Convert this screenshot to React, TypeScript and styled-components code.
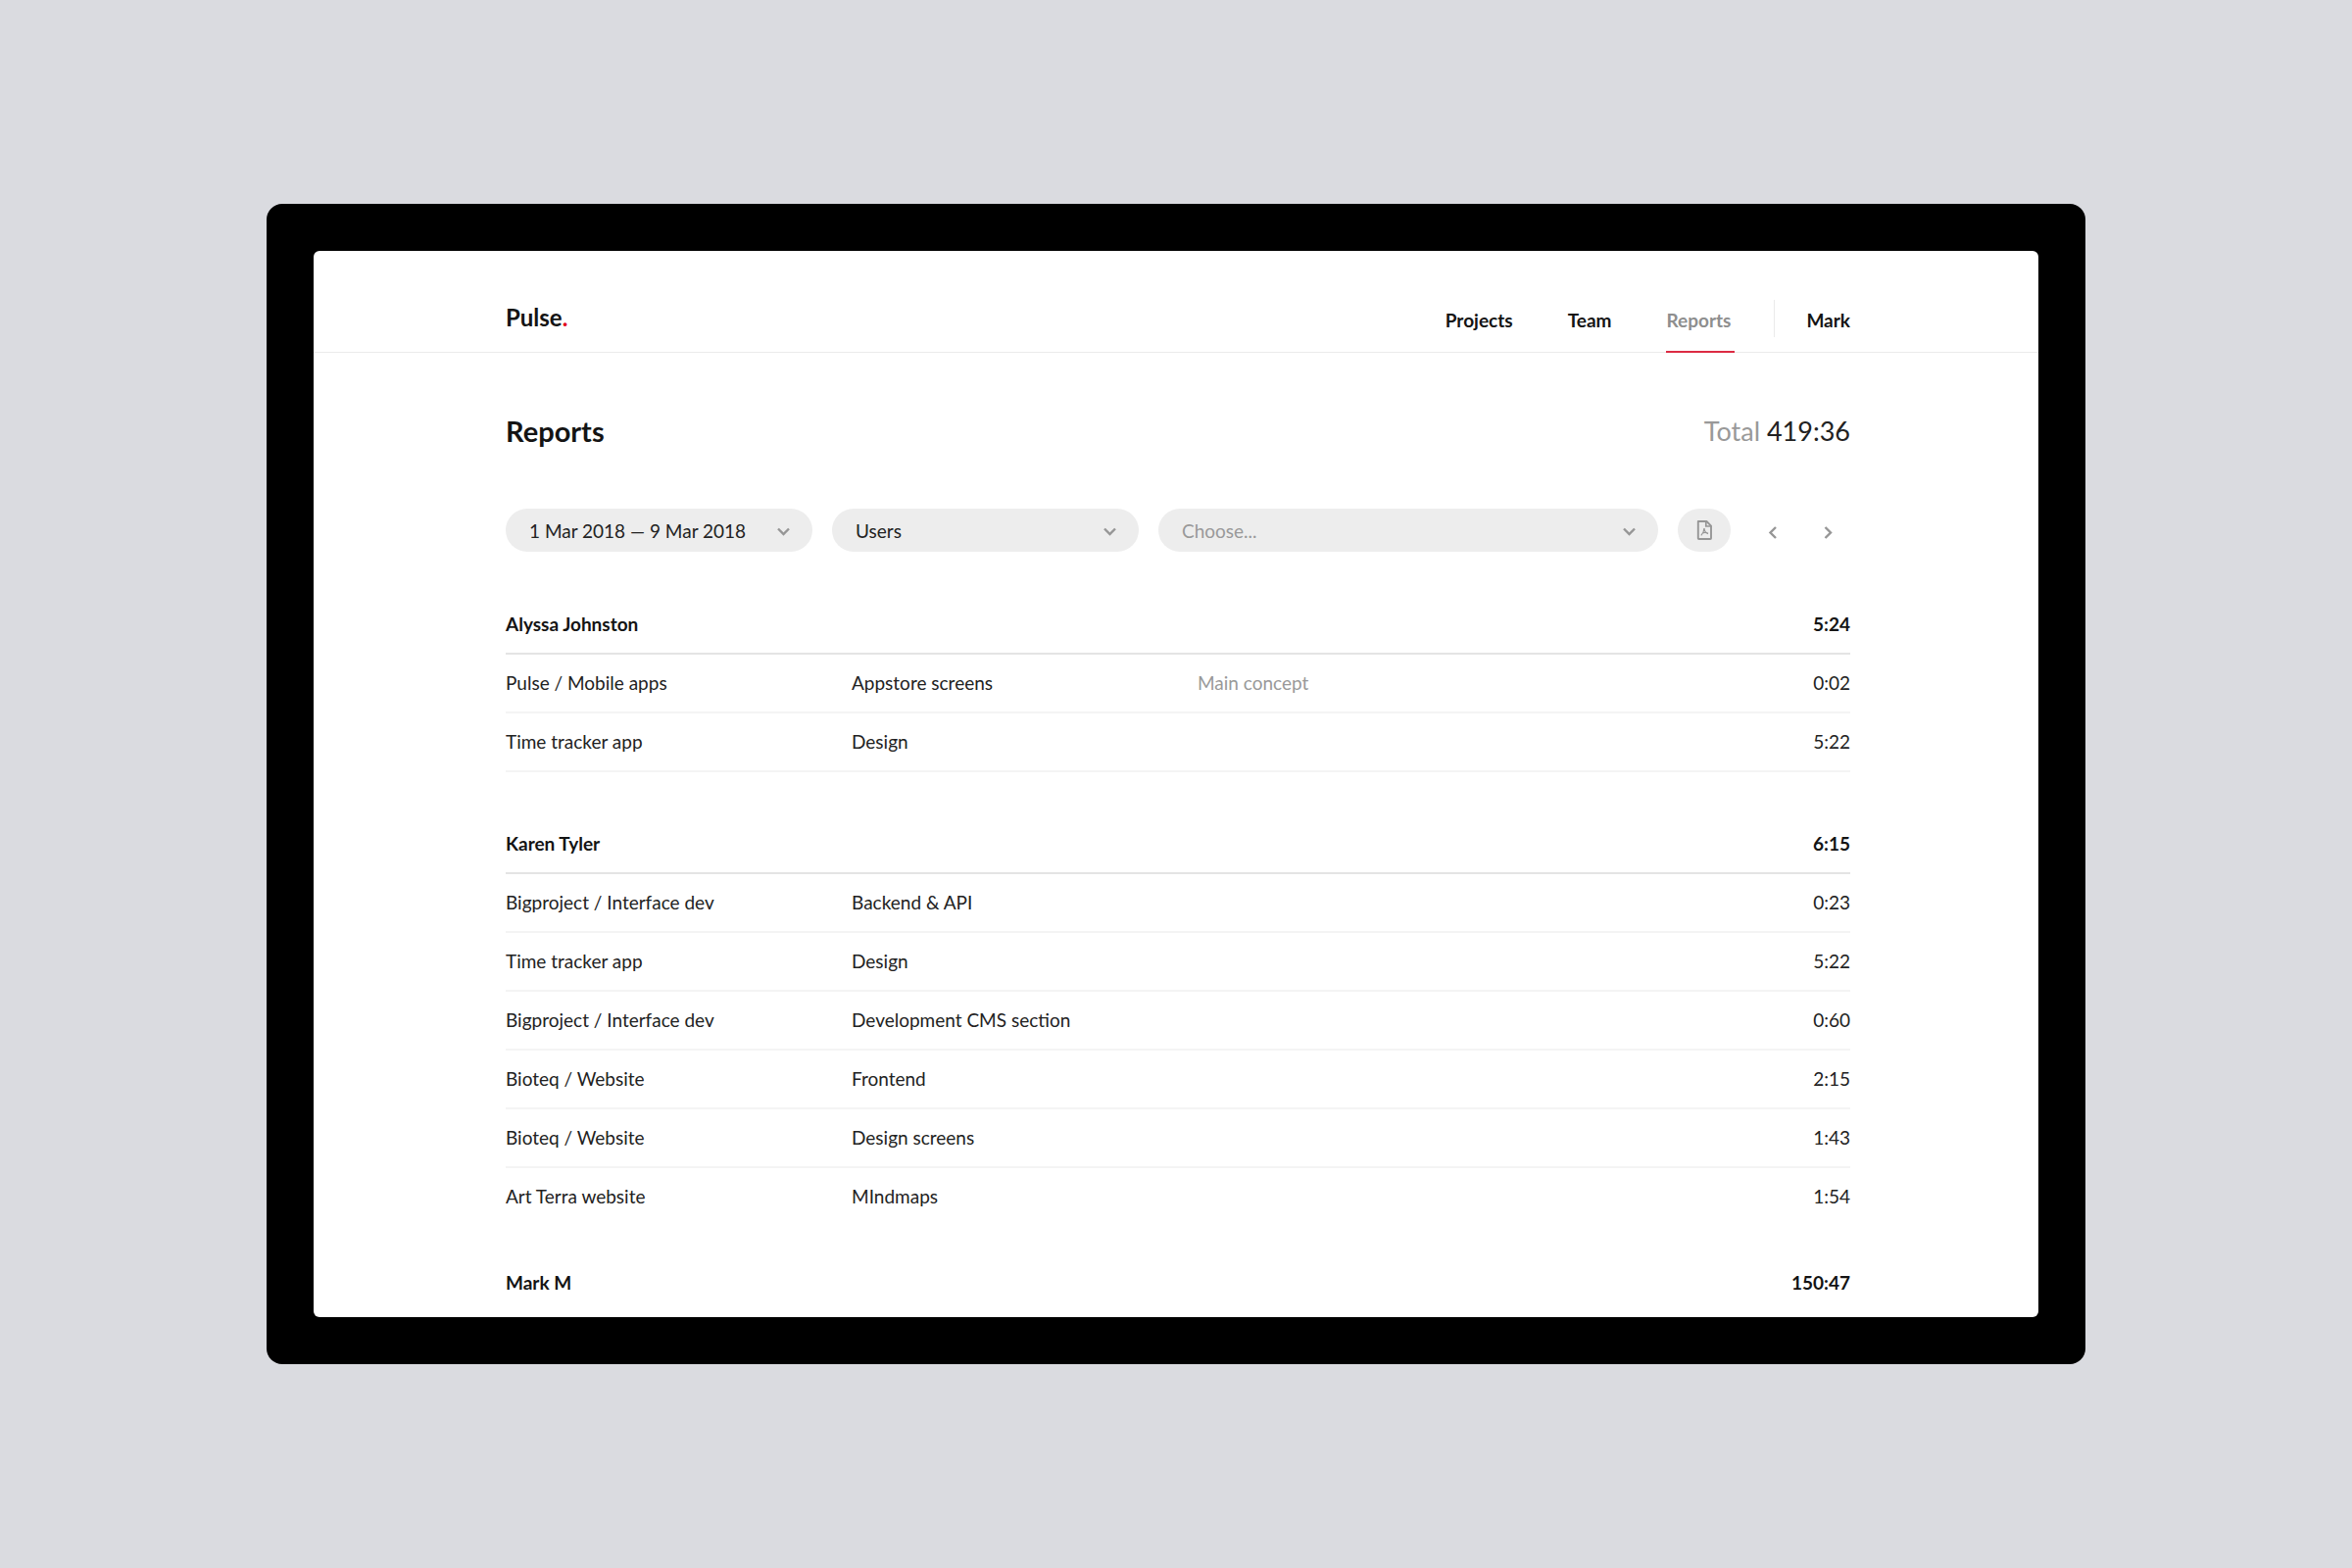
import React from "react";
import styled, { createGlobalStyle, css } from "styled-components";

const GlobalStyle = createGlobalStyle`
  *, *::before, *::after { box-sizing: border-box; }
  body {
    margin: 0;
    background: #dadbe0;
    color: #222;
    font-family: Lato, "Noto Sans", sans-serif;
    font-size: 19px;
    line-height: 24px;
  }
`;

const Stage = styled.div`
  min-height: 100vh;
  padding: 208px 272px;
`;

const Device = styled.div`
  padding: 48px;
  border-radius: 16px;
  background: #000;
`;

const Screen = styled.div`
  overflow: hidden;
  border-radius: 6px;
  background: #fff;
`;

const Header = styled.header`
  display: flex;
  justify-content: space-between;
  height: 104px;
  padding: 0 192px 0 196px;
  border-bottom: 1px solid #ebebeb;
`;

const Logo = styled.a`
  padding-top: 54px;
  color: #141414;
  font-size: 24px;
  font-weight: 700;
  line-height: 28px;
  text-decoration: none;
`;

const Dot = styled.span`
  color: #e2001a;
`;

const NavLink = styled.a<{ $active?: boolean }>`
  height: 104px;
  padding-top: 59px;
  border-bottom: 2px solid transparent;
  color: #141414;
  font-weight: 700;
  text-decoration: none;
  ${(p) =>
    p.$active &&
    css`
      border-color: #dc2b43;
      color: #8e8e8e;
    `}
`;

const Nav = styled.nav`
  display: flex;
  gap: 52px;
  & > ${NavLink} {
    padding-right: 4px;
  }
`;

const Account = styled.div`
  display: flex;
  margin-left: -12px;
`;

const Divider = styled.div`
  width: 1px;
  height: 38px;
  margin: 50px 32px 0 0;
  background: #ebebeb;
`;

const Main = styled.main`
  padding: 60px 192px 6px 196px;
`;

const TitleBar = styled.div`
  display: flex;
  justify-content: space-between;
  font-size: 27px;
  line-height: 40px;
`;

const Title = styled.h1`
  margin: 0;
  color: #141414;
  font-size: 29px;
  font-weight: 700;
`;

const Muted = styled.span`
  color: #999;
`;

const Filters = styled.form`
  display: flex;
  gap: 20px;
  margin: 59px 0 43px;
`;

const Field = styled.label<{ $grow?: boolean }>`
  display: grid;
  align-items: center;
  flex: ${(p) => (p.$grow ? "1" : "0 0 313px")};
  & > * {
    grid-area: 1 / 1;
  }
`;

const Select = styled.select<{ $muted?: boolean }>`
  appearance: none;
  width: 100%;
  height: 44px;
  padding: 2px 48px 0 24px;
  border: 0;
  border-radius: 22px;
  background: #ededed;
  color: ${(p) => (p.$muted ? "#999" : "#222")};
  font: inherit;
`;

const FieldIcon = styled.span`
  display: flex;
  justify-self: end;
  padding: 1px 21px 0 0;
  pointer-events: none;
`;

const PdfButton = styled.button`
  display: flex;
  align-items: center;
  justify-content: center;
  width: 54px;
  height: 44px;
  padding: 0;
  border: 0;
  border-radius: 22px;
  background: #ededed;
`;

const Pager = styled.div`
  display: flex;
  gap: 10px;
  padding-top: 5px;
`;

const PagerButton = styled.button`
  display: flex;
  align-items: center;
  justify-content: center;
  width: 46px;
  height: 38px;
  padding: 0;
  border: 0;
  background: none;
`;

const Table = styled.table<{ $gap?: number }>`
  width: 100%;
  margin-top: ${(p) => p.$gap ?? 0}px;
  border-collapse: separate;
  border-spacing: 0;
  table-layout: fixed;
`;

const NameCol = styled.col`
  width: 353px;
`;

const HeadCell = styled.th<{ $end?: boolean; $line?: boolean }>`
  height: ${(p) => (p.$line ? 62 : 60)}px;
  padding: 2px 0 0;
  border-bottom: ${(p) => (p.$line ? "2px solid #e4e4e4" : "0")};
  color: #141414;
  font-weight: 700;
  text-align: ${(p) => (p.$end ? "right" : "left")};
`;

const Cell = styled.td<{ $end?: boolean; $muted?: boolean; $line?: boolean }>`
  height: 60px;
  padding: 0;
  border-bottom: 2px solid ${(p) => (p.$line ? "#f4f4f4" : "transparent")};
  color: ${(p) => (p.$muted ? "#999" : "#222")};
  text-align: ${(p) => (p.$end ? "right" : "left")};
`;

type Direction = "down" | "left" | "right";

const chevrons: Record<Direction, string> = {
  down: "M3 6.5 L8.5 12 L14 6.5",
  left: "M11 3 L5.5 8.5 L11 14",
  right: "M5.5 3 L11 8.5 L5.5 14",
};

const Chevron = ({ to }: { to: Direction }) => (
  <svg width="17" height="17" viewBox="0 0 17 17" fill="none" stroke="#969696" strokeWidth="2.4" aria-hidden="true">
    <path d={chevrons[to]} />
  </svg>
);

const PdfIcon = () => (
  <svg width="16" height="20" viewBox="0 0 16 20" fill="none" stroke="#969696" aria-hidden="true">
    <path d="M1.8 1 H10.4 L15 5.6 V18.2 Q15 19 14.2 19 H2.6 Q1.8 19 1.8 18.2 V1 Z" strokeWidth="1.9" strokeLinejoin="round" />
    <path d="M9.8 1 V6 H15" strokeWidth="1.7" />
    <path d="M8 8 C7.8 10.8 7.2 13 4.8 15.4 M8 8 C8.1 10.8 8.8 12.4 12 13.6 M6.4 12.9 C8 12.2 10 12.2 12 13.2" strokeWidth="1.2" />
  </svg>
);

interface Entry {
  project: string;
  task: string;
  note?: string;
  time: string;
}

interface Group {
  name: string;
  total: string;
  gap: number;
  closed?: boolean;
  entries: Entry[];
}

const groups: Group[] = [
  {
    name: "Alyssa Johnston",
    total: "5:24",
    gap: 0,
    closed: true,
    entries: [
      { project: "Pulse / Mobile apps", task: "Appstore screens", note: "Main concept", time: "0:02" },
      { project: "Time tracker app", task: "Design", time: "5:22" },
    ],
  },
  {
    name: "Karen Tyler",
    total: "6:15",
    gap: 42,
    entries: [
      { project: "Bigproject / Interface dev", task: "Backend & API", time: "0:23" },
      { project: "Time tracker app", task: "Design", time: "5:22" },
      { project: "Bigproject / Interface dev", task: "Development CMS section", time: "0:60" },
      { project: "Bioteq / Website", task: "Frontend", time: "2:15" },
      { project: "Bioteq / Website", task: "Design screens", time: "1:43" },
      { project: "Art Terra website", task: "MIndmaps", time: "1:54" },
    ],
  },
  { name: "Mark M", total: "150:47", gap: 26, entries: [] },
];

const GroupTable = ({ group }: { group: Group }) => {
  const line = group.entries.length > 0;
  return (
    <Table $gap={group.gap}>
      <colgroup>
        <NameCol />
        <NameCol />
        <col />
        <col />
      </colgroup>
      <thead>
        <tr>
          <HeadCell scope="col" colSpan={3} $line={line}>{group.name}</HeadCell>
          <HeadCell scope="col" $end $line={line}>{group.total}</HeadCell>
        </tr>
      </thead>
      <tbody>
        {group.entries.map((entry, i) => {
          const ruled = group.closed || i < group.entries.length - 1;
          return (
            <tr key={i}>
              <Cell $line={ruled}>{entry.project}</Cell>
              <Cell $line={ruled}>{entry.task}</Cell>
              <Cell $line={ruled} $muted>{entry.note}</Cell>
              <Cell $line={ruled} $end>{entry.time}</Cell>
            </tr>
          );
        })}
      </tbody>
    </Table>
  );
};

interface FilterProps {
  label: string;
  value: string;
  muted?: boolean;
  grow?: boolean;
}

const Filter = ({ label, value, muted, grow }: FilterProps) => (
  <Field $grow={grow}>
    <Select aria-label={label} $muted={muted}>
      <option>{value}</option>
    </Select>
    <FieldIcon>
      <Chevron to="down" />
    </FieldIcon>
  </Field>
);

export default function App() {
  return (
    <>
      <GlobalStyle />
      <Stage>
        <Device>
          <Screen>
            <Header>
              <Logo href="#">Pulse<Dot>.</Dot></Logo>
              <Nav>
                <NavLink href="#projects">Projects</NavLink>
                <NavLink href="#team">Team</NavLink>
                <NavLink href="#reports" $active aria-current="page">Reports</NavLink>
                <Account>
                  <Divider />
                  <NavLink href="#account">Mark</NavLink>
                </Account>
              </Nav>
            </Header>
            <Main>
              <TitleBar>
                <Title>Reports</Title>
                <div><Muted>Total</Muted> 419:36</div>
              </TitleBar>
              <Filters>
                <Filter label="Period" value="1 Mar 2018 — 9 Mar 2018" />
                <Filter label="Group by" value="Users" />
                <Filter label="Filter" value="Choose..." muted grow />
                <PdfButton type="button" aria-label="Export as PDF"><PdfIcon /></PdfButton>
                <Pager>
                  <PagerButton type="button" aria-label="Previous period"><Chevron to="left" /></PagerButton>
                  <PagerButton type="button" aria-label="Next period"><Chevron to="right" /></PagerButton>
                </Pager>
              </Filters>
              {groups.map((group) => (
                <GroupTable key={group.name} group={group} />
              ))}
            </Main>
          </Screen>
        </Device>
      </Stage>
    </>
  );
}
